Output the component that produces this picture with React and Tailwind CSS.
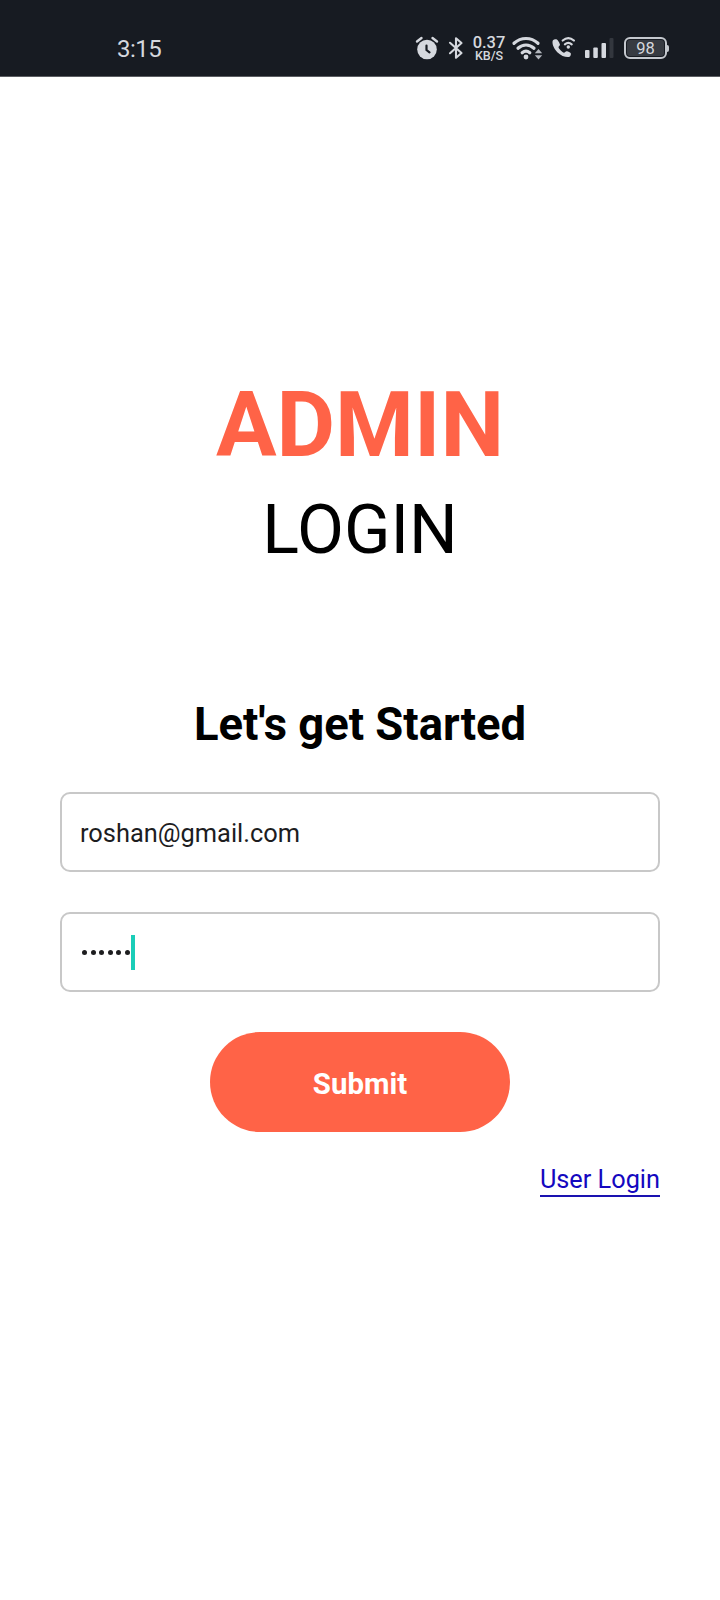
function StatusIcons() {
  return (
    <div className="flex h-8 items-center text-[#d5d8de]">
      <svg width="24" height="24" viewBox="0 0 24 24" className="-ml-px">
        <circle cx="12" cy="13.500" r="9.800" fill="currentColor" />
        <path d="M2 5.500 6.500 2M22 5.500 17.500 2" stroke="currentColor" strokeWidth="2.400" strokeLinecap="round" />
        <path d="M11.500 9.500v4.500l3 2.400" fill="none" stroke="#171b22" strokeWidth="2.200" strokeLinecap="round" />
      </svg>
      <svg width="16" height="24" viewBox="0 0 16 24" className="ml-[9px]">
        <path d="M2 6.800 13.500 17 8 21.800V2.200L13.500 7 2 17.200" fill="none" stroke="currentColor" strokeWidth="2.100" strokeLinejoin="round" strokeLinecap="round" />
      </svg>
      <div className="ml-[8px] flex w-[34px] flex-col items-center pt-[1px]">
        <span className="text-[16.500px] leading-[14px] font-medium">0.37</span>
        <span className="text-[12.500px] leading-[12px] font-medium">KB/S</span>
      </div>
      <svg width="32" height="26" viewBox="0 0 32 26" className="ml-[5px]">
        <g fill="none" stroke="currentColor" strokeWidth="3.200" strokeLinecap="round">
          <path d="M3 8.300c7-6.400 17-6.400 24 0" />
          <path d="M7 13.200c4.800-4.300 11.200-4.300 16 0" />
          <path d="M11.200 17.700c2.400-2 5.200-2 7.600 0" />
        </g>
        <circle cx="15" cy="22" r="2.400" fill="currentColor" />
        <path d="M23.800 18.200 27.500 14l3.700 4.200zM23.800 20.300 27.500 24.500l3.700-4.200z" fill="#b3b7be" />
      </svg>
      <svg width="24" height="24" viewBox="0 0 24 24" className="ml-[8px]">
        <path d="M1.800 4.500C.8 7 2.300 12 6.300 16.200c4 4 9.500 5.600 12.300 4.600.8-.4 1.400-2.200 1.300-3.300-.1-.8-3-2.300-4.300-2.300-1 0-1.800 1.500-2.600 1.500-1.500-.3-5.200-4-5.500-5.500 0-.8 1.600-1.500 1.500-2.600C8.900 7.400 6.800 3.600 5.800 3.400c-1.300-.2-3.600.3-4 1.100z" fill="currentColor" />
        <g fill="none" stroke="currentColor" strokeWidth="2.200" strokeLinecap="round">
          <path d="M11.700 4.500c3.500-3 7.700-3 11.200 0" />
          <path d="M13.900 8.300c2.100-1.700 4.700-1.700 6.800 0" />
        </g>
        <circle cx="17.300" cy="11" r="1.700" fill="currentColor" />
      </svg>
      <svg width="32" height="22" viewBox="0 0 32 22" className="ml-[9px]">
        <rect x="1" y="13" width="4.500" height="8" rx="1" fill="currentColor" />
        <rect x="9.300" y="10.500" width="4.500" height="10.500" rx="1" fill="currentColor" />
        <rect x="17.500" y="6" width="4.500" height="15" rx="1" fill="currentColor" />
        <rect x="25.500" y="1" width="4" height="20" rx="1" fill="#33373e" />
      </svg>
      <div className="ml-[8px] flex h-[22px] w-[43px] items-center justify-center rounded-[6px] border-2 border-[#c4c8ce] bg-[#171b22] p-[1px]">
        <span className="flex h-full w-full items-center justify-center rounded-[3px] bg-[#373b42] pt-[2px] text-[16.500px] leading-[16px]">98</span>
      </div>
      <span className="h-[7px] w-[2px] rounded-r bg-[#c4c8ce]" />
    </div>
  );
}

export default function App() {
  return (
    <div className="flex h-[1600px] w-[720px] flex-col bg-white font-['Roboto',sans-serif]">
      <header className="flex h-[77px] shrink-0 items-center justify-between border-b border-[#5b5d62] bg-[#171b22] pt-[20px] pr-[51px] pl-[117px]">
        <span className="pt-[2px] text-[24px] leading-[32px] tracking-[-0.5px] text-[#d5d8de]">3:15</span>
        <StatusIcons />
      </header>
      <main className="flex flex-col items-center px-[60px] pt-[295px]">
        <h1 className="text-[90.200px] leading-[106px] font-bold text-[#ff6347]">ADMIN</h1>
        <h2 className="mt-[12px] text-[68.300px] leading-[80px] text-black">LOGIN</h2>
        <h3 className="mt-[128px] text-[45.400px] leading-[53px] font-bold text-black">Let's get Started</h3>
        <div className="mt-[41px] flex h-20 w-full items-center rounded-[10px] border-2 border-[#c8c8c8] px-[18px] pt-[2px] text-[25.400px] text-[#1d1d1f]">
          roshan@gmail.com
        </div>
        <div className="mt-10 flex h-20 w-full items-center rounded-[10px] border-2 border-[#c8c8c8] px-[18px]">
          <div className="flex gap-[3.600px] pl-[2px]">
            {[0, 1, 2, 3, 4, 5].map((i) => (
              <span key={i} className="size-[5px] rounded-full bg-[#1d1d1f]" />
            ))}
          </div>
          <span className="ml-[1px] h-[35px] w-1 bg-[#1acdb8]" />
        </div>
        <button className="mt-10 h-[100px] w-[300px] rounded-full bg-[#ff6347] pt-1 text-[29.400px] font-bold text-white">
          Submit
        </button>
        <a className="mt-[32px] self-end border-b-2 border-[#1a12b0] text-[25.300px] leading-[31px] text-[#1408c0]">User Login</a>
      </main>
    </div>
  );
}
